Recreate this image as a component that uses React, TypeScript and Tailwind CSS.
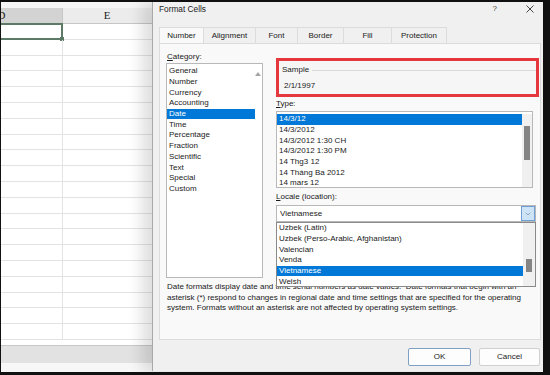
import { ChevronDown } from "lucide-react";

const categories = [
  "General",
  "Number",
  "Currency",
  "Accounting",
  "Date",
  "Time",
  "Percentage",
  "Fraction",
  "Scientific",
  "Text",
  "Special",
  "Custom",
];

const types = [
  "14/3/12",
  "14/3/2012",
  "14/3/2012 1:30 CH",
  "14/3/2012 1:30 PM",
  "14 Thg3 12",
  "14 Tháng Ba 2012",
  "14 mars 12",
];

const locales = [
  "Uzbek (Latin)",
  "Uzbek (Perso-Arabic, Afghanistan)",
  "Valencian",
  "Venda",
  "Vietnamese",
  "Welsh",
];

const tabs = [
  { label: "Number", w: "w-[45px]" },
  { label: "Alignment", w: "w-[52px]" },
  { label: "Font", w: "w-[42px]" },
  { label: "Border", w: "w-[46px]" },
  { label: "Fill", w: "w-[48px]" },
  { label: "Protection", w: "w-[55px]" },
];

function Sheet() {
  return (
    <div className="flex h-full w-full flex-col bg-white">
      <div className="h-[6px] bg-[#f6f6f6]" />
      {/* column headers */}
      <div className="flex h-[16px] border-b border-[#c6c6c6]">
        <div className="ml-[-60px] flex w-[122px] items-center justify-center border-r border-[#c6c6c6] bg-[#d3d3d3] font-['Liberation_Serif',serif] text-[11px] text-[#222]">
          D
        </div>
        <div className="flex w-[88px] items-center justify-center bg-[#ececec] font-['Liberation_Serif',serif] text-[11px] text-[#222]">
          E
        </div>
        <div className="flex-1 bg-[#ececec]" />
      </div>
      {/* rows */}
      <div className="flex flex-1 flex-col">
        {Array.from({ length: 20 }).map((_, i) => (
          <div key={i} className="flex h-[15.8px] shrink-0 border-b border-[#e3e3e3]">
            <div className="relative w-[62px] border-r border-[#e3e3e3]">
              {i === 0 && (
                <div className="absolute bottom-[-1px] left-[-4px] right-[-1px] top-[-1px] border-2 border-[#5c7a66]">
                  <div className="absolute bottom-[-3px] right-[-3px] h-[4px] w-[4px] bg-[#5c7a66]" />
                </div>
              )}
            </div>
            <div className="flex-1" />
          </div>
        ))}
      </div>
      <div className="h-[18px] shrink-0 border-t border-[#c8c8c8] bg-[#e2e2e2]" />
      <div className="h-[9px] shrink-0 bg-[#f7f7f7]" />
    </div>
  );
}

function ListItem({ text, selected }: { text: string; selected?: boolean }) {
  return (
    <div
      className={`flex h-[10.7px] items-center whitespace-nowrap pl-[2px] leading-none ${
        selected ? "bg-[#0078d7] text-white" : "text-[#1a1a1a]"
      }`}
    >
      {text}
    </div>
  );
}

function FormatCells() {
  return (
    <div className="absolute left-[152px] top-[2px] flex h-[369px] w-[391px] flex-col border-l border-[#a8a8a8] bg-[#f0f0f0] font-['Liberation_Sans',Arial,sans-serif] text-[8px] text-[#1a1a1a] shadow-[-10px_0_14px_rgba(0,0,0,0.13)]">
      {/* title bar */}
      <div className="flex h-[14px] items-center pl-[6px] pr-[9px]">
        <span className="text-[8.3px]">Format Cells</span>
        <span className="ml-auto mr-[29px] text-[8px] text-[#444]">?</span>
        <svg width="8" height="8" viewBox="0 0 8 8" className="text-[#333]">
          <path d="M0.5 0.5L7.5 7.5M7.5 0.5L0.5 7.5" stroke="currentColor" strokeWidth="0.9" />
        </svg>
      </div>

      {/* tabs */}
      <div className="ml-[6px] mt-[11px] flex h-[16px]">
        {tabs.map((t, i) => (
          <div
            key={t.label}
            className={`flex ${t.w} items-center justify-center border-r border-t border-[#dcdcdc] ${
              i === 0 ? "border-l bg-[#f9f9f9]" : "bg-[#f0f0f0]"
            }`}
          >
            {t.label}
          </div>
        ))}
      </div>

      {/* panel */}
      <div className="relative ml-[6px] flex h-[297px] w-[382px] flex-col border border-[#dcdcdc] bg-[#f9f9f9]">
        <div className="flex">
          {/* category */}
          <div className="ml-[6px] mt-[8px] flex flex-col">
            <div className="h-[10px] pl-[1px] leading-[10px]">
              <span className="underline underline-offset-1">C</span>ategory:
            </div>
            <div className="relative mt-px h-[215px] w-[97px] border border-[#b8b8b8] bg-white pt-[2px]">
              <div className="w-[88px]">
                {categories.map((c) => (
                  <ListItem key={c} text={c} selected={c === "Date"} />
                ))}
              </div>
              <svg
                width="6"
                height="4"
                viewBox="0 0 6 4"
                className="absolute right-[1px] top-[8px] text-[#a6a6a6]"
              >
                <path d="M0 4L3 0L6 4Z" fill="currentColor" />
              </svg>
            </div>
          </div>

          {/* right column */}
          <div className="ml-[13px] mt-[14px] flex flex-col">
            <div className="relative h-[39px] w-[263px] border-[3px] border-[#e5383e] bg-[#f6f6f6]">
              <div className="flex items-center pl-[3px] pt-[4px] leading-[10px]">
                <span>Sample</span>
                <div className="ml-[3px] mt-px h-px flex-1 bg-[#dadada]" />
              </div>
              <div className="pl-[5px] pt-[6px] leading-[10px]">2/1/1997</div>
            </div>

            <div className="mt-[2px] h-[10px] leading-[10px]">
              <span className="underline underline-offset-1">T</span>ype:
            </div>
            <div className="relative mt-[2px] flex h-[77px] w-[257px] border border-[#b8b8b8] bg-white pt-[2px]">
              <div className="w-[245px]">
                {types.map((t, i) => (
                  <ListItem key={t} text={t} selected={i === 0} />
                ))}
              </div>
              <div className="ml-auto h-full w-[10px] bg-[#f0f0f0]">
                <div className="ml-[2px] mt-[12px] h-[34px] w-[6px] bg-[#858585]" />
              </div>
            </div>

            <div className="mt-[4px] h-[10px] leading-[10px]">
              <span className="underline underline-offset-1">L</span>ocale (location):
            </div>
            <div className="relative mt-[3px] flex h-[17px] w-[260px] items-center border border-[#b8b8b8] bg-white pl-[3px]">
              <span>Vietnamese</span>
              <div className="absolute right-0 top-0 flex h-[15px] w-[14px] items-center justify-center border border-[#6f9fd6] bg-[#cde4f7]">
                <ChevronDown size={8} strokeWidth={1.5} className="text-[#4a6d94]" />
              </div>

              {/* open dropdown */}
              <div className="absolute left-[-1px] top-[16px] z-10 flex h-[65px] w-[260px] overflow-hidden border border-[#8a8a8a] bg-white">
                <div className="w-[246px]">
                  {locales.map((l) => (
                    <ListItem key={l} text={l} selected={l === "Vietnamese"} />
                  ))}
                </div>
                <div className="ml-auto h-full w-[12px] bg-[#f0f0f0]">
                  <div className="ml-[3px] mt-[36px] h-[13px] w-[6px] bg-[#858585]" />
                </div>
              </div>
            </div>
          </div>
        </div>

        <div className="ml-[7px] mt-[4px] leading-[10.7px] text-[#1a1a1a]">
          Date formats display date and time serial numbers as date values.&nbsp; Date formats that begin with an
          <br />
          asterisk (*) respond to changes in regional date and time settings that are specified for the operating
          <br />
          system. Formats without an asterisk are not affected by operating system settings.
        </div>
      </div>

      {/* buttons */}
      <div className="mt-[8px] flex justify-end gap-[8px] pr-[3px]">
        <button
          type="button"
          className="flex h-[18px] w-[63px] items-center justify-center rounded-[2px] border border-[#7f9fc4] bg-[#fdfdfd]"
        >
          OK
        </button>
        <button
          type="button"
          className="flex h-[18px] w-[61px] items-center justify-center rounded-[2px] border border-[#d0d0d0] bg-[#fdfdfd]"
        >
          Cancel
        </button>
      </div>
    </div>
  );
}

export default function App() {
  return (
    <div className="relative h-[375px] w-[550px] overflow-hidden bg-[#111]">
      <div className="absolute bottom-[3px] left-px right-[7px] top-[2px] overflow-hidden">
        <Sheet />
      </div>
      <FormatCells />
    </div>
  );
}
